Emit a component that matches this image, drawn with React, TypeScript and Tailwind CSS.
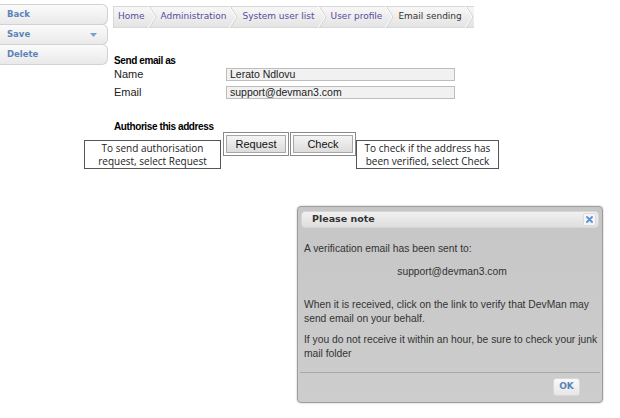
import React from "react";

const tah = { fontFamily: '"DejaVu Sans", Verdana, sans-serif' };

function SideBtn({ label, caret }: { label: string; caret?: boolean }) {
  return (
    <div className="-mt-px flex h-[21px] w-[108px] items-center justify-between rounded-r-[6px] border border-l-0 border-[#d2d2d2] bg-gradient-to-b from-[#fbfbfb] to-[#e9e9e9] pl-[7px] pr-[10px] text-[8.5px] font-bold text-[#5b84b8] first:mt-0">
      <span>{label}</span>
      {caret && (
        <svg width="7" height="4" viewBox="0 0 7 4">
          <path d="M0 0 L7 0 L3.5 4 Z" fill="#7aa0d0" />
        </svg>
      )}
    </div>
  );
}

function Crumb({ label, last }: { label: string; last?: boolean }) {
  return (
    <div className="flex h-full items-center">
      <span className={`whitespace-nowrap pl-[4px] pr-[3px] ${last ? "text-[#333]" : "text-[#5a4b9c]"}`}>{label}</span>
      <svg width="9" height="22" viewBox="0 0 9 22" className="shrink-0">
        <path d="M1 0 L8 11 L1 22" fill="none" stroke="#cfcfcf" strokeWidth="1" />
        <path d="M0 0 L7 11 L0 22" fill="none" stroke="#ffffff" strokeWidth="1" />
      </svg>
    </div>
  );
}

export default function App() {
  return (
    <div className="relative h-[418px] w-[620px] overflow-hidden bg-white" style={{ fontFamily: '"Liberation Sans", Arial, sans-serif' }}>
      <div className="flex">
        {/* sidebar */}
        <div className="flex flex-col pt-[4px]" style={tah}>
          <SideBtn label="Back" />
          <SideBtn label="Save" caret />
          <SideBtn label="Delete" />
        </div>

        {/* main */}
        <div className="flex flex-col pl-[5px] pt-[6px]">
          <div className="flex">
            <div
              className="flex h-[22px] items-center border border-r-0 border-[#d8d8d8] bg-gradient-to-b from-[#f7f7f7] to-[#e4e4e4] text-[9px]"
              style={tah}
            >
              <Crumb label="Home" />
              <Crumb label="Administration" />
              <Crumb label="System user list" />
              <Crumb label="User profile" />
              <Crumb label="Email sending" last />
            </div>
          </div>

          <div className="mt-[26px] pl-[1px] text-[10px] font-bold leading-[14px] tracking-[-0.4px] text-black">Send email as</div>
          <div className="-mt-px flex h-[14px] items-center pl-[1px] text-[11px] leading-[13px] text-[#222]">
            <span className="w-[112px]">Name</span>
            <div className="flex h-[13px] w-[229px] items-center border border-[#bdbdbd] bg-[#f1f1f1] pl-[3px] text-[10.5px] text-[#222]">Lerato Ndlovu</div>
          </div>
          <div className="mt-[4px] flex h-[14px] items-center pl-[1px] text-[11px] leading-[13px] text-[#222]">
            <span className="w-[112px]">Email</span>
            <div className="flex h-[13px] w-[229px] items-center border border-[#bdbdbd] bg-[#f1f1f1] pl-[3px] text-[10.5px] text-[#222]">support@devman3.com</div>
          </div>

          <div className="mt-[22px] pl-[1px] text-[10px] font-bold leading-[12px] tracking-[-0.4px] text-black">Authorise this address</div>

          <div className="-ml-[29px] -mt-px flex items-start">
            <div
              className="mt-[8px] flex h-[29px] w-[137px] flex-col items-center justify-center border border-[#555] text-[10px] leading-[13px] text-[#222]"
              style={{ fontFamily: '"Open Sans", sans-serif' }}
            >
              <span>To send authorisation</span>
              <span>request, select Request</span>
            </div>
            <div className="ml-[2px] flex h-[24px] w-[66px] items-center justify-center border border-[#8a8a8a] p-[2px]">
              <div className="flex h-full w-full items-center justify-center border border-[#a8a8a8] bg-gradient-to-b from-[#f4f4f4] to-[#dcdcdc] text-[11px] text-[#111]">Request</div>
            </div>
            <div className="ml-[1px] flex h-[24px] w-[66px] items-center justify-center border border-[#8a8a8a] p-[2px]">
              <div className="flex h-full w-full items-center justify-center border border-[#a8a8a8] bg-gradient-to-b from-[#f4f4f4] to-[#dcdcdc] text-[11px] text-[#111]">Check</div>
            </div>
            <div
              className="mt-[8px] flex h-[29px] w-[143px] flex-col items-center justify-center border border-[#555] text-[10px] leading-[13px] text-[#222]"
              style={{ fontFamily: '"Open Sans", sans-serif' }}
            >
              <span>To check if the address has</span>
              <span>been verified, select Check</span>
            </div>
          </div>
        </div>
      </div>

      {/* dialog */}
      <div className="absolute left-[297px] top-[206px] flex h-[197px] w-[306px] flex-col overflow-hidden rounded-[4px] border border-[#9c9c9c] bg-gradient-to-b from-[#c6c6c6] to-[#cdcdcd] shadow-[0_0_2px_rgba(0,0,0,0.3)]">
        <div className="mx-[3px] mt-[4px] flex h-[17px] items-center justify-between rounded-[4px] border border-[#d6d6d6] bg-gradient-to-b from-[#f1f1f1] to-[#dedede] pl-[10px] pr-[2px]" style={tah}>
          <span className="text-[9.5px] font-bold text-[#333]">Please note</span>
          <div className="flex h-[13px] w-[13px] items-center justify-center rounded-[2px] border border-[#dcdcdc] bg-[#f5f5f5]">
            <svg width="7" height="7" viewBox="0 0 7 7">
              <path d="M1 1 L6 6 M6 1 L1 6" stroke="#5b8fd6" strokeWidth="1.8" strokeLinecap="round" />
            </svg>
          </div>
        </div>
        <div className="flex flex-1 flex-col pl-[6px] pr-[2px] text-[10.3px] leading-[14px] text-[#333]">
          <div className="mt-[14px]">A verification email has been sent to:</div>
          <div className="mt-[9px] text-center">support@devman3.com</div>
          <div className="mt-[19px] pr-[3px]">When it is received, click on the link to verify that DevMan may send email on your behalf.</div>
          <div className="mt-[7px] whitespace-nowrap">If you do not receive it within an hour, be sure to check your junk</div>
          <div>mail folder</div>
        </div>
        <div className="mx-[2px] mb-[6px] flex h-[24px] items-end justify-end border-t border-[#a9a9a9] pr-[20px]">
          <div className="flex h-[18px] w-[27px] items-center justify-center rounded-[3px] border border-[#d8d8d8] bg-gradient-to-b from-[#fafafa] to-[#e6e6e6] text-[9px] font-bold text-[#5b84b8]" style={tah}>
            OK
          </div>
        </div>
      </div>
    </div>
  );
}
